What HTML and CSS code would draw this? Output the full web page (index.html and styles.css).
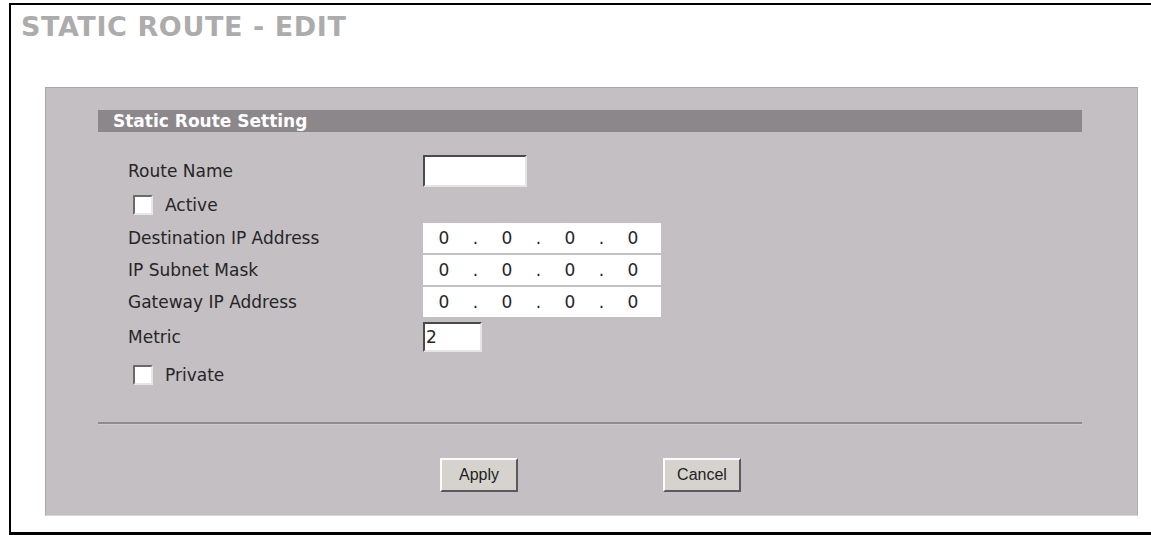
FILE: index.html
```html
<!DOCTYPE html>
<html>
<head>
<meta charset="utf-8">
<title>Static Route - Edit</title>
<link rel="stylesheet" href="styles.css">
</head>
<body>
<div class="frame">
  <h1 class="title">STATIC ROUTE - EDIT</h1>
  <div class="panel">
    <div class="section-head">Static Route Setting</div>
    <div class="form">
      <div class="row h34">
        <span class="lbl">Route Name</span>
        <span class="text-input name-input"></span>
      </div>
      <div class="row h34">
        <span class="checkbox"></span><span class="check-label">Active</span>
      </div>
      <div class="row h32">
        <span class="lbl">Destination IP Address</span>
        <span class="ip-box"><span class="oct">0</span><span class="dot">.</span><span class="oct">0</span><span class="dot">.</span><span class="oct">0</span><span class="dot">.</span><span class="oct">0</span></span>
      </div>
      <div class="row h32">
        <span class="lbl">IP Subnet Mask</span>
        <span class="ip-box"><span class="oct">0</span><span class="dot">.</span><span class="oct">0</span><span class="dot">.</span><span class="oct">0</span><span class="dot">.</span><span class="oct">0</span></span>
      </div>
      <div class="row h32">
        <span class="lbl">Gateway IP Address</span>
        <span class="ip-box"><span class="oct">0</span><span class="dot">.</span><span class="oct">0</span><span class="dot">.</span><span class="oct">0</span><span class="dot">.</span><span class="oct">0</span></span>
      </div>
      <div class="row h38">
        <span class="lbl">Metric</span>
        <span class="text-input metric-input">2</span>
      </div>
      <div class="row h38">
        <span class="checkbox"></span><span class="check-label">Private</span>
      </div>
    </div>
    <div class="sep"></div>
    <div class="buttons">
      <button class="btn">Apply</button>
      <button class="btn">Cancel</button>
    </div>
  </div>
</div>
</body>
</html>
```
FILE: styles.css
```css
html, body {
  margin: 0;
  padding: 0;
  background: #fff;
  overflow: hidden;
}
body {
  font-family: "DejaVu Sans", Verdana, sans-serif;
  color: #262626;
}
.frame {
  margin: 3px 0 0 9px;
  border-left: 2px solid #000;
  border-top: 2px solid #000;
  border-bottom: 3px solid #000;
  padding: 6px 0 16px 0;
}
.title {
  margin: 0 0 44px 0;
  padding-left: 10px;
  font-family: "DejaVu Sans", Verdana, sans-serif;
  font-size: 27px;
  line-height: 32px;
  font-weight: bold;
  letter-spacing: 0.6px;
  color: #acacac;
}
.panel {
  margin-left: 34px;
  width: 1091px;
  background: #c3bfc3;
  border: 1px solid #a9a5a9;
  border-right-color: #b0acb0;
  border-bottom-color: #d8d6d6;
  padding: 22px 0 23px 0;
}
.section-head {
  margin-left: 52px;
  width: 969px;
  height: 22px;
  line-height: 22px;
  padding-left: 15px;
  background: #8b878b;
  color: #fff;
  font-weight: bold;
  font-size: 17px;
}
.form {
  margin-top: 22px;
  padding-left: 82px;
}
.row {
  display: flex;
  align-items: center;
  font-size: 17px;
}
.h34 { height: 34px; }
.h32 { height: 32px; }
.h38 { height: 38px; }
.lbl {
  width: 295px;
  flex: none;
}
.text-input {
  box-sizing: border-box;
  background: #fff;
  border-top: 2px solid #4a4a4a;
  border-left: 2px solid #4a4a4a;
  border-right: 2px solid #e6e4e4;
  border-bottom: 2px solid #e6e4e4;
  font-size: 17px;
  line-height: 26px;
  padding-left: 1px;
}
.name-input {
  width: 104px;
  height: 32px;
}
.metric-input {
  width: 59px;
  height: 30px;
}
.checkbox {
  box-sizing: border-box;
  width: 20px;
  height: 20px;
  margin-left: 5px;
  background: #fff;
  border-top: 2px solid #6a6a6a;
  border-left: 2px solid #6a6a6a;
  border-right: 2px solid #e8e6e6;
  border-bottom: 2px solid #e8e6e6;
  flex: none;
}
.check-label {
  margin-left: 12px;
}
.ip-box {
  box-sizing: border-box;
  width: 238px;
  height: 30px;
  background: #fff;
  display: flex;
  align-items: center;
  font-size: 17px;
}
.oct {
  width: 42px;
  text-align: center;
}
.dot {
  width: 21px;
  text-align: center;
}
.sep {
  margin: 28px 0 0 52px;
  width: 984px;
  height: 2px;
  background: #8e8a8e;
  border-bottom: 1px solid #cfccc6;
}
.buttons {
  margin-top: 33px;
  padding-left: 394px;
  display: flex;
  gap: 145px;
}
.btn {
  box-sizing: border-box;
  width: 78px;
  height: 34px;
  margin: 0;
  padding: 0;
  background: #d6d3ce;
  border-top: 2px solid #fbfbfb;
  border-left: 2px solid #fbfbfb;
  border-right: 2px solid #5a5a5a;
  border-bottom: 2px solid #5a5a5a;
  font-family: "Liberation Sans", Arial, sans-serif;
  font-size: 16px;
  color: #222;
}
```
